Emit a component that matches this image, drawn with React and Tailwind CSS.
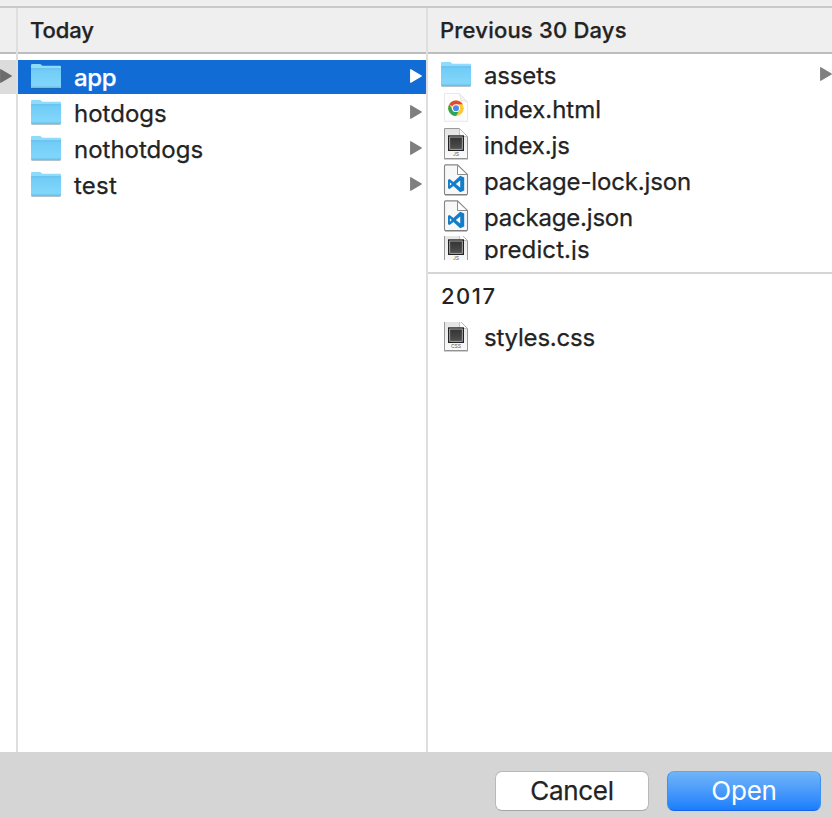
import React from "react";

function Folder() {
  return (
    <svg className="h-[34px] w-[44px] shrink-0" viewBox="0 0 44 34">
      <defs>
        <linearGradient id="folder" x1="0" y1="0" x2="0" y2="1">
          <stop offset="0" stopColor="#6ecbf6" />
          <stop offset="1" stopColor="#86d8fb" />
        </linearGradient>
      </defs>
      <path d="M1.5 28.5h29" stroke="#000" strokeOpacity=".2" />
      <path d="M1 5.2Q1 4 2.2 4h7.3c1 0 1.5.5 2 1 .6.6 1 .8 2 .8H30Q31 5.800 31 6.800V27Q31 28 30 28H2Q1 28 1 27Z" fill="#8edbfb" />
      <path d="M1 8.500h30v18.500Q31 28 30 28H2Q1 28 1 27Z" fill="url(#folder)" />
      <path d="M1 8.800h30" stroke="#5fb9e6" strokeWidth=".8" />
      <path d="M1 26.300h30" stroke="#68c0ea" strokeWidth=".6" />
      <path d="M1.500 27.800h29" stroke="#50a9d3" strokeWidth=".7" />
    </svg>
  );
}

function CodeFile({ tag }) {
  return (
    <svg className="h-[34px] w-[44px] shrink-0" viewBox="0 0 44 34">
      <defs>
        <linearGradient id="page" x1="0" y1="0" x2="0" y2="1">
          <stop offset="0" stopColor="#e2e2e2" />
          <stop offset="1" stopColor="#fbfbfb" />
        </linearGradient>
        <linearGradient id="screen" x1="0" y1="0" x2="0" y2="1">
          <stop offset="0" stopColor="#333" />
          <stop offset="1" stopColor="#505050" />
        </linearGradient>
      </defs>
      <path d="M4.500.5H19.500L27.500 8.500V30.500H4.500Z" fill="url(#page)" stroke="#999" />
      <path d="M4 31h24" stroke="#888" strokeWidth=".8" />
      <path d="M19.500.5V8.500H27.500Z" fill="#fafafa" stroke="#b5b5b5" strokeWidth=".8" />
      <rect x="8" y="7.300" width="16" height="15.700" fill="#222" />
      <rect x="9.700" y="9" width="12.600" height="12.300" fill="url(#screen)" stroke="#c4c4c4" strokeWidth=".8" />
      <text x="16" y="28.300" textAnchor="middle" fontFamily="Inter, sans-serif" fontSize="5" fill="#555">{tag}</text>
    </svg>
  );
}

function VsFile() {
  return (
    <svg className="h-[34px] w-[44px] shrink-0" viewBox="0 0 44 34">
      <path d="M5.500.9H17.500L27.500 10.500V29.500Q27.500 30.500 26.500 30.500H5.500Q4.500 30.500 4.500 29.500V1.900Q4.500.9 5.500.9Z" fill="#f8f8f8" stroke="#858585" strokeWidth="1.100" />
      <path d="M5 31.100h22" stroke="#777" strokeWidth=".8" />
      <path d="M17.500 1.200V10.500H27.300Z" fill="#fff" stroke="#8c8c8c" />
      <path fillRule="evenodd" d="M20.200 11.800L24.200 13.400V26.600L20.200 28.200L13.400 22.100L9.600 25L8 24.200V15.800L9.600 15L13.400 17.900ZM20.200 16.600L15.900 20L20.200 23.400ZM9.900 18.200V21.800L11.700 20Z" fill="#147dc9" />
    </svg>
  );
}

function ChromeFile() {
  return (
    <svg className="h-[34px] w-[44px] shrink-0" viewBox="0 0 44 34">
      <path d="M4.500 1.500H19L27.500 10V29.300H4.500Z" fill="#fdfdfd" stroke="#e3e3e3" strokeWidth=".8" />
      <path d="M19 1.500L27.500 10Q24 8.300 20.800 9.300Q21 4.500 19 1.500Z" fill="#f2f2f2" stroke="#dfdfdf" strokeWidth=".6" />
      <circle cx="16" cy="16.200" r="7.800" fill="#fbcb34" />
      <path d="M16 16.200L9.250 12.300A7.800 7.800 0 0 1 22.750 12.300H16Z" fill="#e2473a" />
      <path d="M9.250 12.300A7.800 7.800 0 0 0 16 24L19.400 18.200L16 16.200L12.600 18.200Z" fill="#2da457" />
      <circle cx="16" cy="16.200" r="3.900" fill="#fff" />
      <circle cx="16" cy="16.200" r="3" fill="#4a87ee" />
    </svg>
  );
}

function Arrow({ className = "text-[#7f7f7f]" }) {
  return (
    <svg className={"h-[34px] w-3 shrink-0 " + className} viewBox="0 0 12 34">
      <path d="M.7 9.700L11.300 16L.7 22.300Z" fill="currentColor" stroke="currentColor" strokeWidth="1.200" strokeLinejoin="round" />
    </svg>
  );
}

function Row({ icon, name, tracking, arrow, selected }) {
  return (
    <div className={"flex h-[34px] shrink-0 items-center pl-3 " + (selected ? "bg-[#116cd6] font-medium text-white" : "")}>
      {icon}
      <span className={"flex-1 whitespace-nowrap pt-0.5 text-[24px] leading-[34px] [-webkit-text-stroke:0.25px_currentColor] " + tracking}>{name}</span>
      {arrow}
    </div>
  );
}

function Header({ children, tracking }) {
  return (
    <div className={"h-[46px] shrink-0 border-b-2 border-[#bdbdbd] bg-[#efefef] pl-3 text-[22px] font-medium leading-[44px] whitespace-nowrap [-webkit-text-stroke:0.25px_currentColor] " + tracking}>
      {children}
    </div>
  );
}

export default function App() {
  return (
    <div className="flex h-[818px] w-[832px] flex-col overflow-hidden bg-white font-['Inter',sans-serif] text-[#232323]">
      <div className="h-2 shrink-0 border-b-2 border-[#c9c9c9] bg-[#efefef]" />
      <div className="flex h-[744px] shrink-0">
        <div className="w-[18px] shrink-0 border-r-2 border-[#dfdfdf]">
          <div className="h-[46px] border-b-2 border-[#bdbdbd] bg-[#efefef]" />
          <div className="mt-1.5 h-[34px] bg-[#dcdcdc]">
            <Arrow className="text-[#6c6c6c]" />
          </div>
        </div>
        <div className="w-[410px] shrink-0 border-r-2 border-[#dfdfdf]">
          <Header tracking="tracking-[-0.1px]">Today</Header>
          <div className="mt-1.5 flex flex-col gap-0.5 [&>div]:pr-1">
            <Row selected icon={<Folder />} name="app" tracking="tracking-[-0.3px]" arrow={<Arrow className="text-white" />} />
            <Row icon={<Folder />} name="hotdogs" tracking="tracking-[0px]" arrow={<Arrow />} />
            <Row icon={<Folder />} name="nothotdogs" tracking="tracking-[0px]" arrow={<Arrow />} />
            <Row icon={<Folder />} name="test" tracking="tracking-[0.2px]" arrow={<Arrow />} />
          </div>
        </div>
        <div className="w-[404px] shrink-0">
          <Header tracking="tracking-[0.2px]">Previous 30 Days</Header>
          <div className="flex h-[220px] flex-col border-b-2 border-[#d5d5d5] pt-1">
            <Row icon={<Folder />} name="assets" tracking="tracking-[-0.15px]" arrow={<Arrow />} />
            <div className="flex flex-col gap-0.5">
              <Row icon={<ChromeFile />} name="index.html" tracking="tracking-[0px]" />
              <Row icon={<CodeFile tag="JS" />} name="index.js" tracking="tracking-[-0.1px]" />
              <Row icon={<VsFile />} name="package-lock.json" tracking="tracking-[-0.15px]" />
              <Row icon={<VsFile />} name="package.json" tracking="tracking-[-0.2px]" />
              <div className="h-6 overflow-hidden">
                <div className="-mt-1">
                  <Row icon={<CodeFile tag="JS" />} name="predict.js" tracking="tracking-[0.1px]" />
                </div>
              </div>
            </div>
          </div>
          <div className="h-12 pl-[13px] text-[22px] font-medium leading-[44px] tracking-[1.5px]">2017</div>
          <div className="flex h-8 flex-col justify-end overflow-hidden">
            <Row icon={<CodeFile tag="CSS" />} name="styles.css" tracking="tracking-[-0.2px]" />
          </div>
        </div>
      </div>
      <div className="flex h-[66px] shrink-0 justify-end gap-[18px] bg-[#d5d5d5] pr-[11px] pt-[19px] text-[26px]">
        <button className="h-10 w-[154px] rounded-[7px] border border-[#b9b9b9] border-b-[#a5a5a5] bg-white leading-[38px] tracking-[-0.3px] [-webkit-text-stroke:0.25px_currentColor]">Cancel</button>
        <button className="h-10 w-[154px] rounded-[7px] border border-[#3d8ff0] border-t-[#5fa6ee] border-b-[#1a62e8] bg-linear-to-b from-[#70b4f8] to-[#177efc] leading-[38px] tracking-[-0.2px] text-white">Open</button>
      </div>
    </div>
  );
}
